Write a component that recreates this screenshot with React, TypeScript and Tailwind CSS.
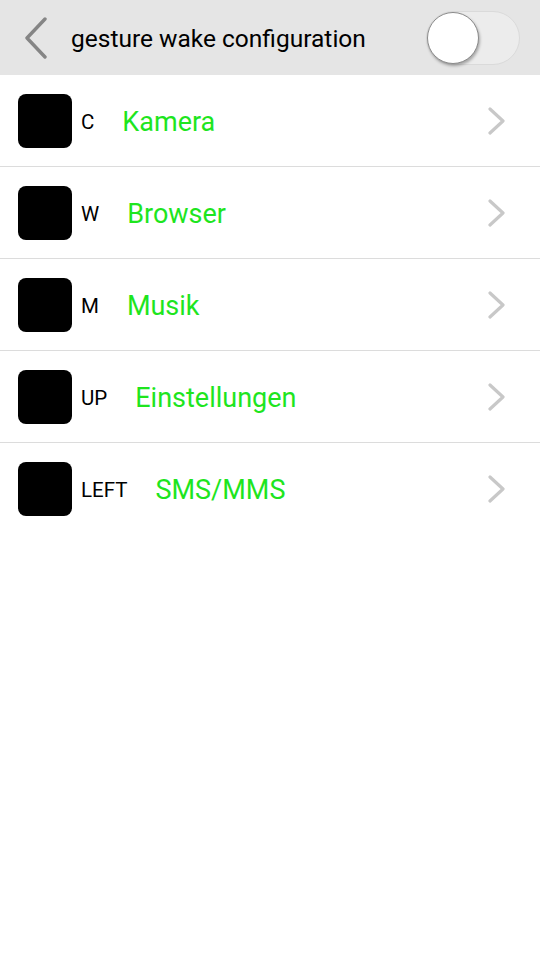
const items = [
  { gesture: 'C', app: 'Kamera' },
  { gesture: 'W', app: 'Browser' },
  { gesture: 'M', app: 'Musik' },
  { gesture: 'UP', app: 'Einstellungen' },
  { gesture: 'LEFT', app: 'SMS/MMS' },
];

const ChevronRight = () => (
  <svg width="20" height="28" viewBox="0 0 20 28" fill="none">
    <path d="M3 2 L16 14 L3 26" stroke="#c8c8c8" strokeWidth="3.2" strokeLinecap="round" strokeLinejoin="round" />
  </svg>
);

export default function App() {
  return (
    <div className="w-[540px] h-[960px] bg-white font-['Roboto',sans-serif]">
      <div className="h-[75px] bg-[#e5e5e5] flex items-center">
        <button className="ml-[22px] w-[28px] flex items-center">
          <svg width="28" height="42" viewBox="0 0 28 42" fill="none">
            <path d="M23 2 L5 21 L23 40" stroke="#858585" strokeWidth="3.4" strokeLinecap="round" strokeLinejoin="round" />
          </svg>
        </button>
        <h1 className="ml-[21px] pt-[3px] text-[24.5px] text-black flex-1">gesture wake configuration</h1>
        <div className="mr-[20px] w-[94px] h-[54px] rounded-full bg-[#ececec] border border-[#dadada] flex items-center">
          <div className="w-[52px] h-[52px] rounded-full bg-white border border-[#8a8a8a] shadow-[1px_2px_3px_rgba(0,0,0,0.3)]" />
        </div>
      </div>
      <ul>
        {items.map((item, i) => (
          <li
            key={item.gesture}
            className={
              'h-[92px] flex items-center ' + (i < items.length - 1 ? 'border-b border-[#dcdcdc]' : '')
            }
          >
            <div className="ml-[18px] w-[54px] h-[54px] rounded-[8px] bg-black" />
            <span className="ml-[9px] pt-[3px] text-[20.5px] text-black">{item.gesture}</span>
            <span className="ml-[28px] pt-[3px] text-[27px] text-[#1ee51e] flex-1">{item.app}</span>
            <span className="mr-[33px]">
              <ChevronRight />
            </span>
          </li>
        ))}
      </ul>
    </div>
  );
}
